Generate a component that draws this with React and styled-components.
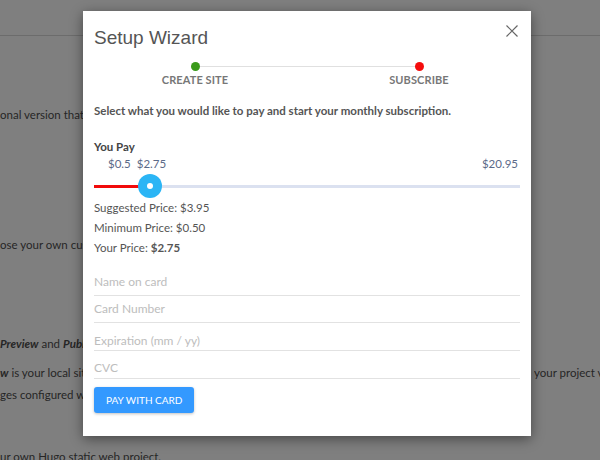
import React from 'react';
import styled, { createGlobalStyle } from 'styled-components';

const GlobalStyle = createGlobalStyle`
  html, body {
    margin: 0;
    padding: 0;
    width: 600px;
    height: 460px;
    overflow: hidden;
    background: #7f7f7f;
    font-family: Lato, "Open Sans", sans-serif;
  }
`;

const Page = styled.div`
  width: 600px;
  height: 460px;
  overflow: hidden;
  position: relative;
`;

const Header = styled.div`
  height: 35px;
  border-bottom: 1px solid #6c6c6c;
`;

const Para = styled.div`
  margin-top: ${props => props.$top}px;
  font-size: 11.5px;
  line-height: 22px;
  color: #262626;
  white-space: nowrap;
`;

const Line = styled.div`
  display: flex;
`;

const RightFrag = styled.span`
  margin-left: auto;
  width: 66px;
  overflow: hidden;
`;

const Em = styled.b`
  font-style: italic;
`;

const Overlay = styled.div`
  position: absolute;
  inset: 0;
  padding: 11px 0 0 83px;
`;

const Modal = styled.div`
  position: relative;
  width: 448px;
  box-sizing: border-box;
  padding: 15px 11px 23px;
  background: #fff;
  box-shadow: 0 3px 12px rgba(0, 0, 0, 0.45);
  color: #555;
`;

const Title = styled.h2`
  margin: 0;
  font-family: "Liberation Sans", Arial, sans-serif;
  font-weight: 400;
  font-size: 19px;
  line-height: 24px;
  color: #555;
`;

const Close = styled.button`
  position: absolute;
  top: 13px;
  right: 12px;
  width: 14px;
  height: 14px;
  padding: 0;
  border: 0;
  background: none;
  display: flex;
  align-items: center;
  justify-content: center;
`;

const Stepper = styled.div`
  display: flex;
  margin: 12px -11px 0;
`;

const Step = styled.div`
  flex: 1;
  position: relative;
  display: flex;
  flex-direction: column;
  align-items: center;
`;

const Connector = styled.div`
  position: absolute;
  top: 4px;
  left: 50%;
  width: 100%;
  height: 1px;
  background: #e0e0e0;
`;

const Dot = styled.span`
  position: relative;
  width: 9px;
  height: 9px;
  border-radius: 50%;
  background: ${props => props.$color};
`;

const StepLabel = styled.span`
  margin-top: 2px;
  font-size: 11px;
  line-height: 14px;
  font-weight: 700;
  color: #777;
  letter-spacing: 0.1px;
`;

const Lead = styled.p`
  margin: 16px 0 0;
  font-size: 11.5px;
  line-height: 16px;
  font-weight: 700;
  color: #555;
`;

const PayLabel = styled.div`
  margin-top: 20px;
  font-size: 11.5px;
  line-height: 16px;
  font-weight: 700;
  color: #444;
`;

const Marks = styled.div`
  display: flex;
  gap: 6px;
  padding-left: 14px;
  margin-top: 1px;
  font-size: 11.5px;
  line-height: 16px;
  color: #5b6a88;
`;

const EndMark = styled.span`
  margin-left: auto;
  padding-right: 2px;
`;

const Slider = styled.div`
  position: relative;
  height: 24px;
  margin-top: 2px;
  display: flex;
  align-items: center;
`;

const Track = styled.div`
  position: relative;
  flex: 1;
  height: 3px;
  background: #dbe1f0;
`;

const Fill = styled.div`
  height: 100%;
  background: #f10b0b;
`;

const Thumb = styled.div`
  position: absolute;
  top: 0;
  width: 24px;
  height: 24px;
  margin-left: -12px;
  border-radius: 50%;
  background: #2bb5f5;
  display: flex;
  align-items: center;
  justify-content: center;

  &::after {
    content: '';
    width: 6px;
    height: 6px;
    border-radius: 50%;
    background: #fff;
  }
`;

const Prices = styled.div`
  margin-top: 0;
  font-size: 11.5px;
  line-height: 20px;
  color: #555;
`;

const Form = styled.div`
  margin-top: 9px;
  display: flex;
  flex-direction: column;
`;

const Field = styled.div`
  padding: ${props => props.$top}px 0 ${props => props.$bottom}px;
  border-bottom: 1px solid #e2e2e2;
  font-size: 12px;
  line-height: 16px;
  color: #bdbdbd;
`;

const PayButton = styled.button`
  align-self: flex-start;
  margin-top: 8px;
  height: 26px;
  padding: 0 12px;
  border: 0;
  border-radius: 3px;
  background: #3399ff;
  color: #fff;
  font-family: Lato, sans-serif;
  font-size: 10px;
  box-shadow: 0 1px 3px rgba(0, 0, 0, 0.25);
`;

const MAX = 20.95;
const value = 2.75;

const App = () => {
  const pct = (value / MAX) * 100;
  return (
    <Page>
      <GlobalStyle />
      <Header />
      <Para $top={68}>onal version that</Para>
      <Para $top={108}>ose your own cus</Para>
      <Para $top={77}>
        <Em>Preview</Em> and <Em>Public</Em>
      </Para>
      <Para $top={7}>
        <Line>
          <span>
            <Em>w</Em> is your local sit
          </span>
          <RightFrag>your project v</RightFrag>
        </Line>
        <Line>ges configured we</Line>
      </Para>
      <Para $top={40}>ur own Hugo static web project.</Para>

      <Overlay>
        <Modal>
          <Title>Setup Wizard</Title>
          <Close aria-label="Close">
            <svg width="12" height="12" viewBox="0 0 12 12">
              <path d="M0.5 0.5L11.5 11.5M11.5 0.5L0.5 11.5" stroke="#666" strokeWidth="1.2" fill="none" />
            </svg>
          </Close>

          <Stepper>
            <Step>
              <Connector />
              <Dot $color="#3a9a1a" />
              <StepLabel>CREATE SITE</StepLabel>
            </Step>
            <Step>
              <Dot $color="#f50d0d" />
              <StepLabel>SUBSCRIBE</StepLabel>
            </Step>
          </Stepper>

          <Lead>Select what you would like to pay and start your monthly subscription.</Lead>

          <PayLabel>You Pay</PayLabel>
          <Marks>
            <span>$0.5</span>
            <span>${value}</span>
            <EndMark>${MAX}</EndMark>
          </Marks>
          <Slider>
            <Track>
              <Fill style={{ width: `${pct}%` }} />
            </Track>
            <Thumb style={{ left: `${pct}%` }} />
          </Slider>

          <Prices>
            <div>Suggested Price: $3.95</div>
            <div>Minimum Price: $0.50</div>
            <div>
              Your Price: <b>${value}</b>
            </div>
          </Prices>

          <Form>
            <Field $top={7} $bottom={5}>Name on card</Field>
            <Field $top={5} $bottom={5}>Card Number</Field>
            <Field $top={10} $bottom={1}>Expiration (mm / yy)</Field>
            <Field $top={9} $bottom={2}>CVC</Field>
            <PayButton>PAY WITH CARD</PayButton>
          </Form>
        </Modal>
      </Overlay>
    </Page>
  );
};

export default App;
